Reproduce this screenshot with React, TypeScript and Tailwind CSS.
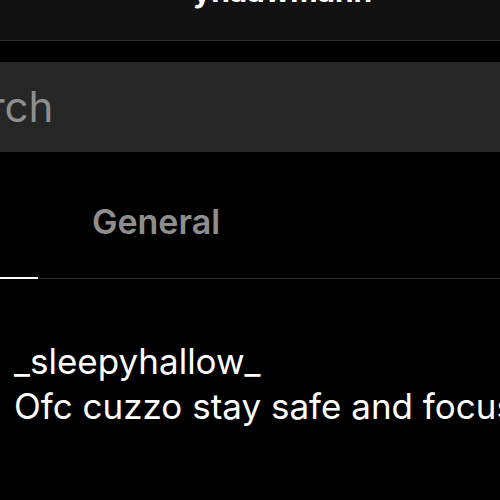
export default function App() {
  return (
    <div
      className="w-full h-[500px] overflow-hidden bg-black text-white"
      style={{ fontFamily: "Inter, 'Liberation Sans', sans-serif" }}
    >
      {/* header, title mostly scrolled off */}
      <div className="h-[41px] bg-[#121212] border-b border-[#2c2c2c] overflow-hidden">
        <div className="mt-[-24px] pl-[193px] text-[30px] font-bold leading-none whitespace-nowrap">
          yhaawmann
        </div>
      </div>

      {/* search */}
      <div className="mt-[21px] h-[90px] bg-[#262626] flex items-center overflow-hidden">
        <span className="-ml-[86px] text-[42px] text-[#8e8e8e] leading-none whitespace-nowrap">
          Search
        </span>
      </div>

      {/* tabs */}
      <div className="relative h-[127px] border-b border-[#2a2a2a] flex items-center">
        <span className="ml-[92px] mt-[12px] text-[34px] font-semibold text-[#8e8e8e]">General</span>
        <div className="absolute left-0 -bottom-px w-[38px] h-[2px] bg-white" />
      </div>

      {/* message */}
      <div className="pt-[60px] pl-[14px] whitespace-nowrap">
        <div className="text-[35px] leading-[45px]">_sleepyhallow_</div>
        <div className="text-[35px] leading-[45px]">Ofc cuzzo stay safe and focused</div>
      </div>
    </div>
  );
}
